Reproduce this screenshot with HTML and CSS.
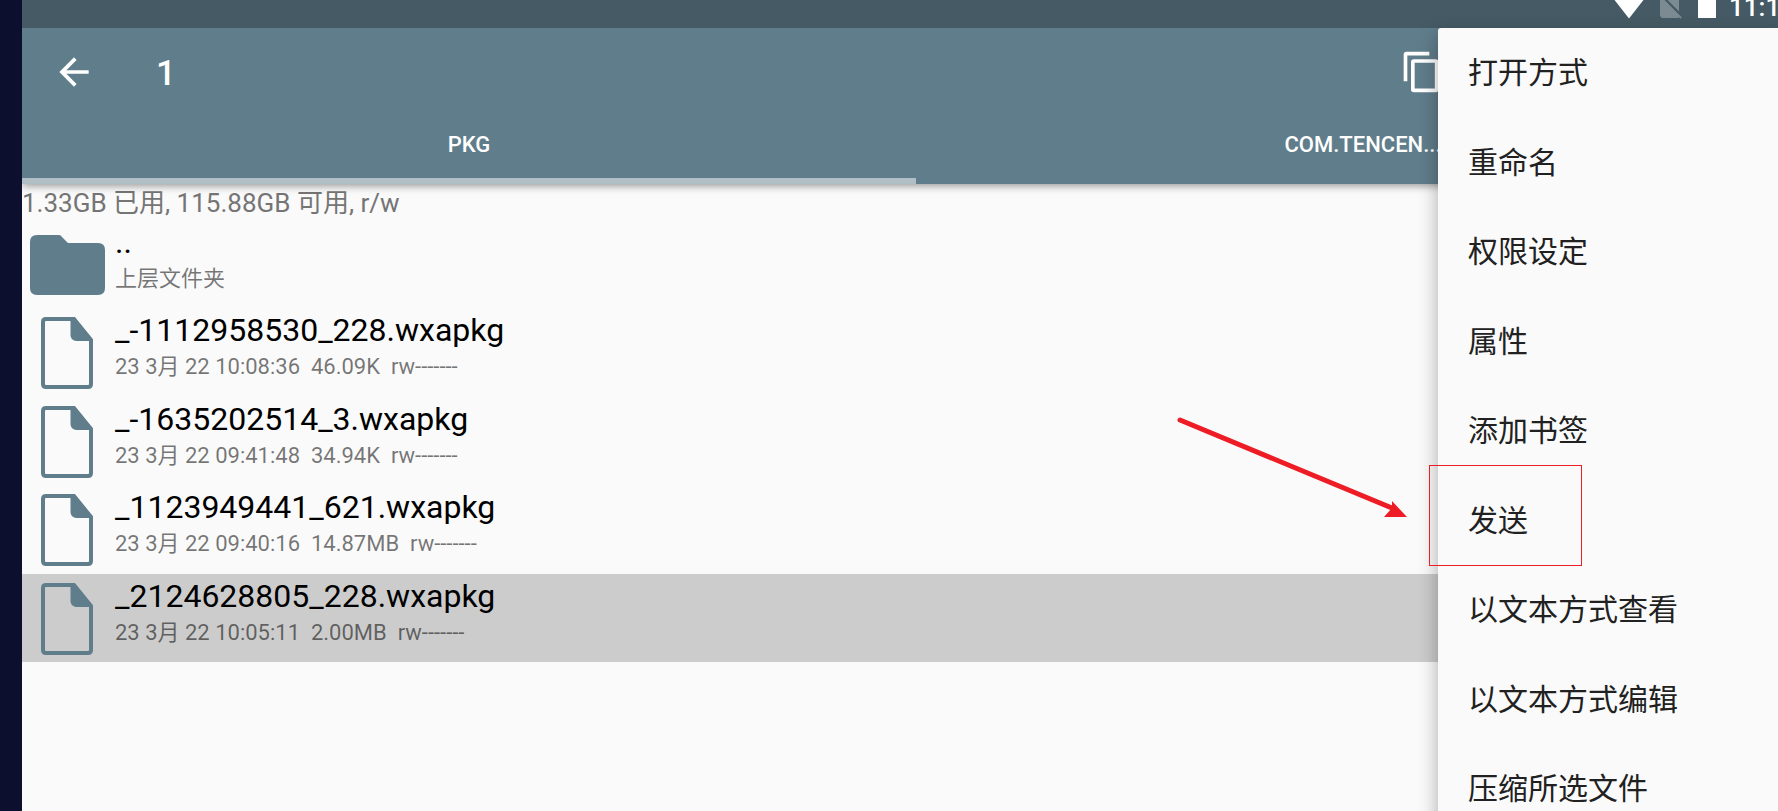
FILE: index.html
```html
<!DOCTYPE html>
<html lang="zh-CN">
<head>
<meta charset="utf-8">
<meta name="viewport" content="width=device-width, initial-scale=1">
<title>1</title>
<link rel="stylesheet" href="styles.css">
</head>
<body>
<svg class="symbols" aria-hidden="true">
  <symbol id="file" viewBox="0 0 52 72">
    <path d="M5 2H33L50 23V67Q50 70 47 70H5Q2 70 2 67V5Q2 2 5 2Z" fill="none" stroke="#607d8b" stroke-width="4"/>
    <path d="M29.500 1H34L51 22V24H35Q29.500 23 29.500 18Z" fill="#607d8b"/>
  </symbol>
</svg>
<div class="screen">
  <header class="header">
    <div class="status">
      <svg class="status-icon wifi" viewBox="0 0 32 28" aria-hidden="true"><path d="M0 -2H32L16 18.500Z" fill="#fff"/></svg>
      <svg class="status-icon sim" viewBox="0 0 22 28" aria-hidden="true"><path d="M0 0H4L19 15V17L18 18H2L0 16Z" fill="#7c8b92"/><path d="M7 0H19V12Z" fill="#7c8b92"/><path d="M3 -1L21 18" stroke="#7c8b92" stroke-width="2"/><path d="M5 -1L20 14" stroke="#455a64" stroke-width="2"/></svg>
      <svg class="status-icon battery" viewBox="0 0 18 28" aria-hidden="true"><path d="M0 0H18V18H0Z" fill="#fff"/></svg>
      <span class="clock">11:1</span>
    </div>
    <div class="toolbar">
      <button class="icon-button" type="button" aria-label="返回"><svg class="icon" viewBox="0 0 24 24"><path d="M20 11H7.830l5.590-5.590L12 4l-8 8 8 8 1.410-1.410L7.830 13H20z" fill="#fff"/></svg></button>
      <h1 class="title">1</h1>
      <button class="icon-button copy" type="button" aria-label="复制"><svg class="icon" viewBox="0 0 24 24"><path d="M16 1H3.500Q2 1 2 2.500V17h2V3h12V1zm3.500 4H7.500Q6 5 6 6.500v15Q6 23 7.500 23h12q1.500 0 1.500-1.500v-15Q21 5 19.500 5zM19 21H8V7h11v14z" fill="#fff"/></svg></button>
    </div>
    <nav class="tabs">
      <button class="tab active" type="button">PKG</button>
      <button class="tab" type="button">COM.TENCEN...</button>
    </nav>
  </header>
  <main>
    <p class="storage">1.33GB 已用, 115.88GB 可用, r/w</p>
    <ul class="files">
      <li><button class="row" type="button">
        <span class="thumb"><svg class="folder" viewBox="0 0 75 60"><path d="M7 0H29Q31 0 32 2L38 8H68Q75 8 75 15V53Q75 60 68 60H7Q0 60 0 53V7Q0 0 7 0Z" fill="#607d8b"/></svg></span>
        <span class="info"><span class="name">..</span><span class="meta">上层文件夹</span></span>
      </button></li>
      <li><button class="row" type="button">
        <span class="thumb"><svg class="file"><use href="#file"/></svg></span>
        <span class="info"><span class="name">_-1112958530_228.wxapkg</span><span class="meta">23 3月 22 10:08:36  46.09K  rw-------</span></span>
      </button></li>
      <li><button class="row" type="button">
        <span class="thumb"><svg class="file"><use href="#file"/></svg></span>
        <span class="info"><span class="name">_-1635202514_3.wxapkg</span><span class="meta">23 3月 22 09:41:48  34.94K  rw-------</span></span>
      </button></li>
      <li><button class="row" type="button">
        <span class="thumb"><svg class="file"><use href="#file"/></svg></span>
        <span class="info"><span class="name">_1123949441_621.wxapkg</span><span class="meta">23 3月 22 09:40:16  14.87MB  rw-------</span></span>
      </button></li>
      <li><button class="row selected" type="button">
        <span class="thumb"><svg class="file"><use href="#file"/></svg></span>
        <span class="info"><span class="name">_2124628805_228.wxapkg</span><span class="meta">23 3月 22 10:05:11  2.00MB  rw-------</span></span>
      </button></li>
    </ul>
  </main>
  <div class="menu">
    <button class="item" type="button">打开方式</button>
    <button class="item" type="button">重命名</button>
    <button class="item" type="button">权限设定</button>
    <button class="item" type="button">属性</button>
    <button class="item" type="button">添加书签</button>
    <button class="item" type="button">发送</button>
    <button class="item" type="button">以文本方式查看</button>
    <button class="item" type="button">以文本方式编辑</button>
    <button class="item" type="button">压缩所选文件</button>
  </div>
  <svg class="arrow" viewBox="0 0 232 104" aria-hidden="true"><path d="M4 4L216 92" stroke="#ee1c24" stroke-width="5" stroke-linecap="round"/><path d="M231 101L216 85V92L208 101Z" fill="#ee1c24"/></svg>
  <div class="highlight"></div>
</div>
</body>
</html>
```
FILE: styles.css
```css
* {
  box-sizing: border-box;
}

body {
  margin: 0;
  background: #0c0f2e;
  font-family: Roboto, "Noto Sans CJK SC", sans-serif;
  color: #000;
}

button {
  margin: 0;
  padding: 0;
  border: 0;
  background: none;
  font: inherit;
  color: inherit;
  text-align: left;
}

.symbols {
  display: none;
}

.screen {
  position: relative;
  height: 100vh;
  margin-left: 22px;
  overflow: hidden;
  background: #fafafa;
}

.header {
  position: relative;
  background: #607d8b;
  color: #fff;
  box-shadow: 0 2px 8px rgba(0, 0, 0, 0.4);
}

.status {
  display: flex;
  justify-content: flex-end;
  height: 28px;
  overflow: hidden;
  background: #455a64;
}

.status-icon {
  flex: none;
  height: 28px;
}

.wifi {
  width: 32px;
  margin-right: 15px;
}

.sim {
  width: 22px;
  margin-right: 16px;
}

.battery {
  width: 18px;
  margin-right: 13px;
}

.clock {
  width: 49px;
  font-size: 26px;
  font-weight: 500;
  line-height: 14px;
  white-space: nowrap;
}

.toolbar {
  display: flex;
  align-items: center;
  height: 88px;
  padding: 0 334px 0 30px;
}

.icon-button,
.icon {
  display: block;
  width: 44px;
  height: 44px;
}

.title {
  flex: 1;
  margin: 0;
  padding: 2px 0 0 60px;
  font-size: 35px;
  font-weight: 500;
}

.tabs {
  display: grid;
  grid-template-columns: 1fr 1fr;
  height: 68px;
  margin-right: -32px;
}

.tab {
  padding-bottom: 6px;
  border-bottom: 6px solid transparent;
  font-size: 22px;
  font-weight: 500;
  text-align: center;
}

.tab.active {
  border-bottom-color: #b0bec5;
}

.storage {
  margin: 0;
  padding-top: 2px;
  font-size: 26px;
  line-height: 34px;
  color: #757575;
}

.files {
  display: grid;
  grid-auto-rows: 88px 89px;
  margin: 0;
  padding: 0;
  list-style: none;
}

.row {
  display: flex;
  width: 100%;
  height: 100%;
}

.row.selected {
  background: #ccc;
}

.thumb {
  display: flex;
  align-items: center;
  justify-content: center;
  width: 90px;
  height: 89px;
}

.folder {
  width: 75px;
  height: 60px;
}

.file {
  width: 52px;
  height: 72px;
}

.info {
  display: flex;
  flex-direction: column;
  padding: 4px 0 0 3px;
}

.name {
  font-size: 32px;
  line-height: 36px;
}

.meta {
  font-size: 22px;
  line-height: 38px;
  white-space: pre;
  color: rgba(0, 0, 0, 0.54);
}

.menu {
  position: absolute;
  top: 28px;
  right: 0;
  display: grid;
  grid-auto-rows: 89px 90px;
  width: 340px;
  border-radius: 3px 0 0 0;
  background: #fafafa;
  box-shadow: 0 8px 20px rgba(0, 0, 0, 0.32);
}

.item {
  padding: 0 0 5px 30px;
  font-size: 30px;
  color: #212121;
}

.arrow {
  position: absolute;
  top: 416px;
  right: 370px;
  width: 232px;
  height: 104px;
}

.highlight {
  position: absolute;
  top: 465px;
  right: 196px;
  width: 153px;
  height: 101px;
  border: 1px solid #ee1c24;
}
```
